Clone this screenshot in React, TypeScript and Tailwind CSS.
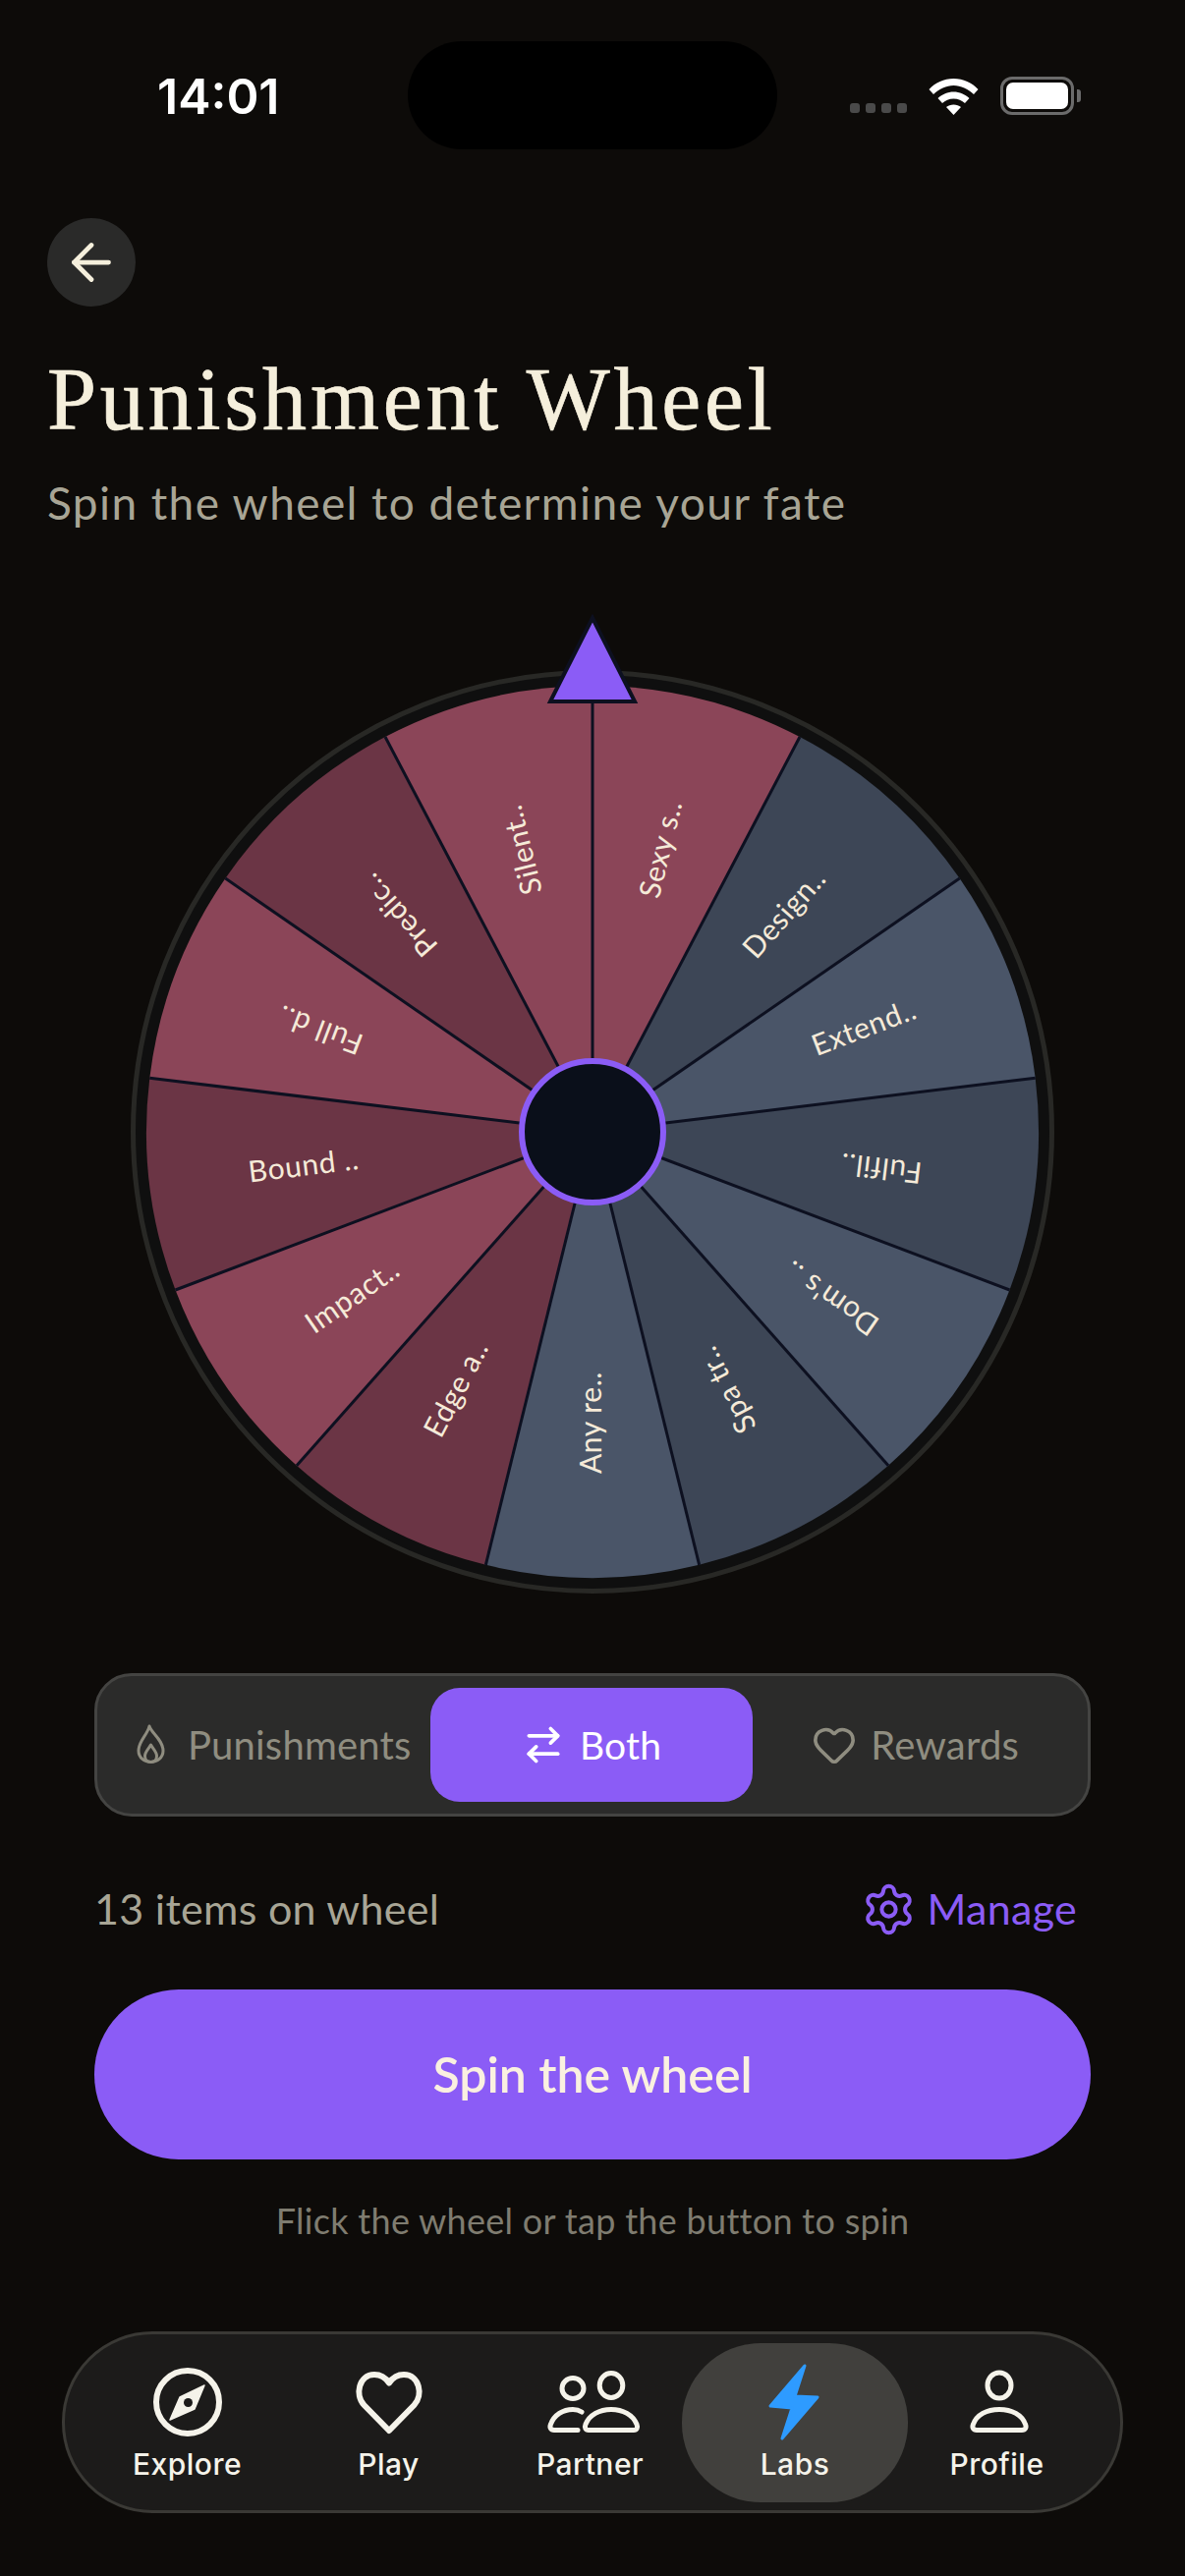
import React from 'react';
import { ArrowLeft, ArrowRightLeft, Heart, Settings } from 'lucide-react';

const CX = 480;
const CY = 527;
const WHEEL_R = 454;
const SLICE = 360 / 13;

const PINK = '#8b4558';
const MAROON = '#6b3545';
const SLATE = '#4a5568';
const DARK_SLATE = '#3d4656';

const SLICES = [
    { label: 'Sexy s..', fill: PINK },
    { label: 'Design..', fill: DARK_SLATE },
    { label: 'Extend..', fill: SLATE },
    { label: 'Fulfil..', fill: DARK_SLATE },
    { label: "Dom's ..", fill: SLATE },
    { label: 'Spa tr..', fill: DARK_SLATE },
    { label: 'Any re..', fill: SLATE },
    { label: 'Edge a..', fill: MAROON },
    { label: 'Impact..', fill: PINK },
    { label: 'Bound ..', fill: MAROON },
    { label: 'Full d..', fill: PINK },
    { label: 'Predic..', fill: MAROON },
    { label: 'Silent..', fill: PINK },
];

const point = (deg: number, r: number) => {
    const rad = (deg * Math.PI) / 180;
    return [CX + r * Math.sin(rad), CY - r * Math.cos(rad)];
};

const Wheel: React.FC = () => (
    <svg viewBox="0 0 960 1000" className="block w-[960px] h-[1000px] mx-auto">
        <circle cx={CX} cy={CY} r={467.5} fill="#0f0f0f" stroke="#282825" strokeWidth={5} />
        {SLICES.map((s, i) => {
            const [x1, y1] = point(i * SLICE, WHEEL_R);
            const [x2, y2] = point((i + 1) * SLICE, WHEEL_R);
            return (
                <path
                    key={s.label}
                    d={`M${CX} ${CY}L${x1} ${y1}A${WHEEL_R} ${WHEEL_R} 0 0 1 ${x2} ${y2}Z`}
                    fill={s.fill}
                />
            );
        })}
        {SLICES.map((s, i) => {
            const [x, y] = point(i * SLICE, WHEEL_R);
            return <line key={s.label} x1={CX} y1={CY} x2={x} y2={y} stroke="#0d1020" strokeWidth={3} />;
        })}
        {SLICES.map((s, i) => {
            const mid = (i + 0.5) * SLICE;
            const [x, y] = point(mid, 296);
            const rotate = mid > 90 && mid < 270 ? mid + 90 : mid - 90;
            return (
                <text
                    key={s.label}
                    x={x}
                    y={y - 3}
                    transform={`rotate(${rotate} ${x} ${y})`}
                    textAnchor="middle"
                    dominantBaseline="central"
                    fill="#f5ead8"
                    className="font-['Lato',sans-serif] text-[30px] tracking-[0.6px]"
                >
                    {s.label}
                </text>
            );
        })}
        <circle cx={CX} cy={CY} r={72} fill="#0a0f1a" stroke="#8b5cf6" strokeWidth={6} />
        <polygon points="480,4 437,89 523,89" fill="#8b5cf6" stroke="#0d1020" strokeWidth={4} />
    </svg>
);

const Wifi = () => (
    <svg viewBox="0 0 51 37" className="w-[51px] h-[37px]" fill="#fff">
        <path d="M0.5 11C7 4 15.5 0 25.5 0S44 4 50.5 11L46 16C40 10.5 33 7 25.5 7S11 10.5 5 16Z" />
        <path d="M9.5 20C14 16 19.5 13.5 25.5 13.5S37 16 41.5 20L37 25C34 22.5 30 20.5 25.5 20.5S17 22.5 14 25Z" />
        <path d="M18 29C20 27.5 22.5 26.5 25.5 26.5S31 27.5 33 29L25.5 37Z" />
    </svg>
);

const Flame = () => (
    <svg viewBox="0 0 30 42" className="w-[30px] h-[42px]" fill="none" stroke="currentColor" strokeWidth={3} strokeLinejoin="round">
        <path d="M13 2C15 9 27 16 27 27C27 34 21 38.5 14.5 38.5S2 34 2 27C2 17 11 11 13 2Z" />
        <path d="M14.5 21C16.5 25 20.5 28 20.5 32.5C20.5 36 18 38.5 14.5 38.5S8.5 36 8.5 32.5C8.5 28 12.5 25 14.5 21Z" />
    </svg>
);

const Compass = () => (
    <svg viewBox="0 0 80 80" className="w-[80px] h-[80px]" fill="none">
        <circle cx={40} cy={40} r={32} stroke="#f5f3ea" strokeWidth={6} />
        <path d="M57 23L32 35L22 58L47 47Z" fill="#f5f3ea" stroke="#f5f3ea" strokeWidth={1.5} strokeLinejoin="round" />
        <circle cx={40.5} cy={40.5} r={4.5} fill="#1c1b1a" />
    </svg>
);

const PlayHeart = () => (
    <svg viewBox="0 0 80 80" className="w-[80px] h-[80px]" fill="none" stroke="#f5f3ea" strokeWidth={6} strokeLinejoin="round">
        <path d="M40 69L14.5 43C5 33 9 12 25 12C32 12 37 16 40 20.5C43 16 48 12 55 12C71 12 75 33 65.5 43Z" />
    </svg>
);

const Partner = () => (
    <svg viewBox="0 0 110 80" className="w-[110px] h-[80px]" fill="none" stroke="#f5f3ea" strokeWidth={5} strokeLinecap="round">
        <ellipse cx={76} cy={23} rx={11.8} ry={12.5} />
        <ellipse cx={37} cy={26} rx={11} ry={10.5} />
        <path d="M53 68.5H99C102 68.5 103.5 66 102 62.5C98 53 88 47.5 76 47.5S54 53 50 62.5C48.5 66 50 68.5 53 68.5Z" />
        <path d="M42 68.5H18C14.5 68.5 13 66 14.5 62.5C18 53 27 47.5 37 47.5C40 47.5 43 48 46 50" />
    </svg>
);

const Bolt = () => (
    <svg viewBox="0 0 80 80" className="w-[80px] h-[80px]">
        <path d="M50 3L15 44L37 46L27 77L63 35L40 34Z" fill="#2e9bff" stroke="#2e9bff" strokeWidth={3} strokeLinejoin="round" />
    </svg>
);

const Person = () => (
    <svg viewBox="0 0 80 80" className="w-[80px] h-[80px]" fill="none" stroke="#f5f3ea" strokeWidth={5}>
        <ellipse cx={42} cy={23} rx={12} ry={13} />
        <path d="M19 68.5H65C68.5 68.5 70 66 68.5 62.5C65 53 55 47.5 42 47.5S19 53 15.5 62.5C14 66 15.5 68.5 19 68.5Z" />
    </svg>
);

const NAV = [
    { label: 'Explore', icon: <Compass /> },
    { label: 'Play', icon: <PlayHeart /> },
    { label: 'Partner', icon: <Partner /> },
    { label: 'Labs', icon: <Bolt />, active: true },
    { label: 'Profile', icon: <Person /> },
];

const App: React.FC = () => {
    return (
        <div className="w-[1206px] h-[2622px] overflow-hidden bg-[#0d0b09] font-['Lato',sans-serif]">
            {/* status bar */}
            <div className="flex items-start pt-[42px] pl-[160px]">
                <div className="w-[255px] mt-[29px] font-['Inter',sans-serif] text-[50px] leading-[54px] font-semibold text-white">14:01</div>
                <div className="w-[376px] h-[110px] rounded-full bg-black" />
                <div className="flex items-end ml-[74px] mt-[36px]">
                    <div className="flex gap-[6px] mb-[2px]">
                        <div className="w-[10px] h-[10px] rounded-[3px] bg-[#4a4a4a]" />
                        <div className="w-[10px] h-[10px] rounded-[3px] bg-[#4a4a4a]" />
                        <div className="w-[10px] h-[10px] rounded-[3px] bg-[#4a4a4a]" />
                        <div className="w-[10px] h-[10px] rounded-[3px] bg-[#4a4a4a]" />
                    </div>
                    <div className="ml-[22px]"><Wifi /></div>
                    <div className="ml-[22px] w-[75px] h-[39px] rounded-[12px] border-[3px] border-[#6b6b6b] p-[3px]">
                        <div className="w-full h-full rounded-[7px] bg-white" />
                    </div>
                    <div className="ml-[3px] mb-[13px] w-[4px] h-[13px] rounded-r-[3px] bg-[#6b6b6b]" />
                </div>
            </div>

            <div className="pl-[48px] pt-[70px]">
                <button className="flex items-center justify-center w-[90px] h-[90px] rounded-full bg-[#2a2a29] text-[#f5efdc]">
                    <ArrowLeft size={60} strokeWidth={1.9} />
                </button>
                <h1 className="mt-[45px] font-['Liberation_Serif',serif] text-[90px] leading-[100px] tracking-[3.8px] [-webkit-text-stroke:0.7px_#f5efdc] text-[#f5efdc]">Punishment Wheel</h1>
                <p className="mt-[27px] text-[46px] leading-[56px] tracking-[1.4px] text-[#a8a595]">Spin the wheel to determine your fate</p>
            </div>

            <div className="mt-[85px]">
                <Wheel />
            </div>

            <div className="px-[96px] mt-[78px]">
                <div className="flex items-center h-[146px] rounded-[38px] border-[3px] border-[#444442] bg-[#2b2b2a] pl-[40px] pr-[70px] text-[40px] tracking-[0.2px] text-[#8f8d80]">
                    <div className="flex items-center gap-[22px] w-[299px]">
                        <Flame />
                        <span>Punishments</span>
                    </div>
                    <div className="flex items-center justify-center gap-[15px] w-[328px] h-[116px] rounded-[30px] bg-[#8b5cf6] text-white">
                        <ArrowRightLeft size={44} strokeWidth={2} />
                        <span className="text-[39px]">Both</span>
                    </div>
                    <div className="flex flex-1 items-center justify-end gap-[14px]">
                        <Heart size={46} strokeWidth={1.9} />
                        <span>Rewards</span>
                    </div>
                </div>

                <div className="flex items-center justify-between mt-[66px] h-[56px] text-[43px] tracking-[0.3px] text-[#a8a595]">
                    <span>13 items on wheel</span>
                    <div className="flex items-center gap-[10px] pr-[14px] text-[#8b5cf6]">
                        <Settings size={57} strokeWidth={1.7} />
                        <span>Manage</span>
                    </div>
                </div>

                <button className="block mt-[54px] w-full h-[173px] rounded-[86px] bg-[#8b5cf6] text-[50px] font-semibold text-[#faf0e0]">Spin the wheel</button>

                <p className="mt-[40px] text-center text-[36px] leading-[44px] tracking-[0.3px] text-[#7f7c70]">Flick the wheel or tap the button to spin</p>
            </div>

            <div className="mx-[63px] mt-[91px]">
                <div className="flex items-center h-[185px] rounded-[92px] border-[3px] border-[#3a3935] bg-[#1c1b1a] pl-[22px]">
                    {NAV.map(item => (
                        <div
                            key={item.label}
                            className={item.active
                                ? 'flex flex-col items-center w-[230px] -ml-[9px] -mr-[12px] h-[162px] pt-[20px] rounded-[80px] bg-[#41403d]'
                                : 'flex flex-col items-center w-[205px] h-[162px] pt-[20px]'}
                        >
                            <div className="h-[80px] flex items-center">{item.icon}</div>
                            <span className="mt-[3px] font-['Inter',sans-serif] text-[30px] leading-[40px] tracking-[0.5px] font-medium text-[#f5f3ea]">{item.label}</span>
                        </div>
                    ))}
                </div>
            </div>
        </div>
    );
};

export default App;
